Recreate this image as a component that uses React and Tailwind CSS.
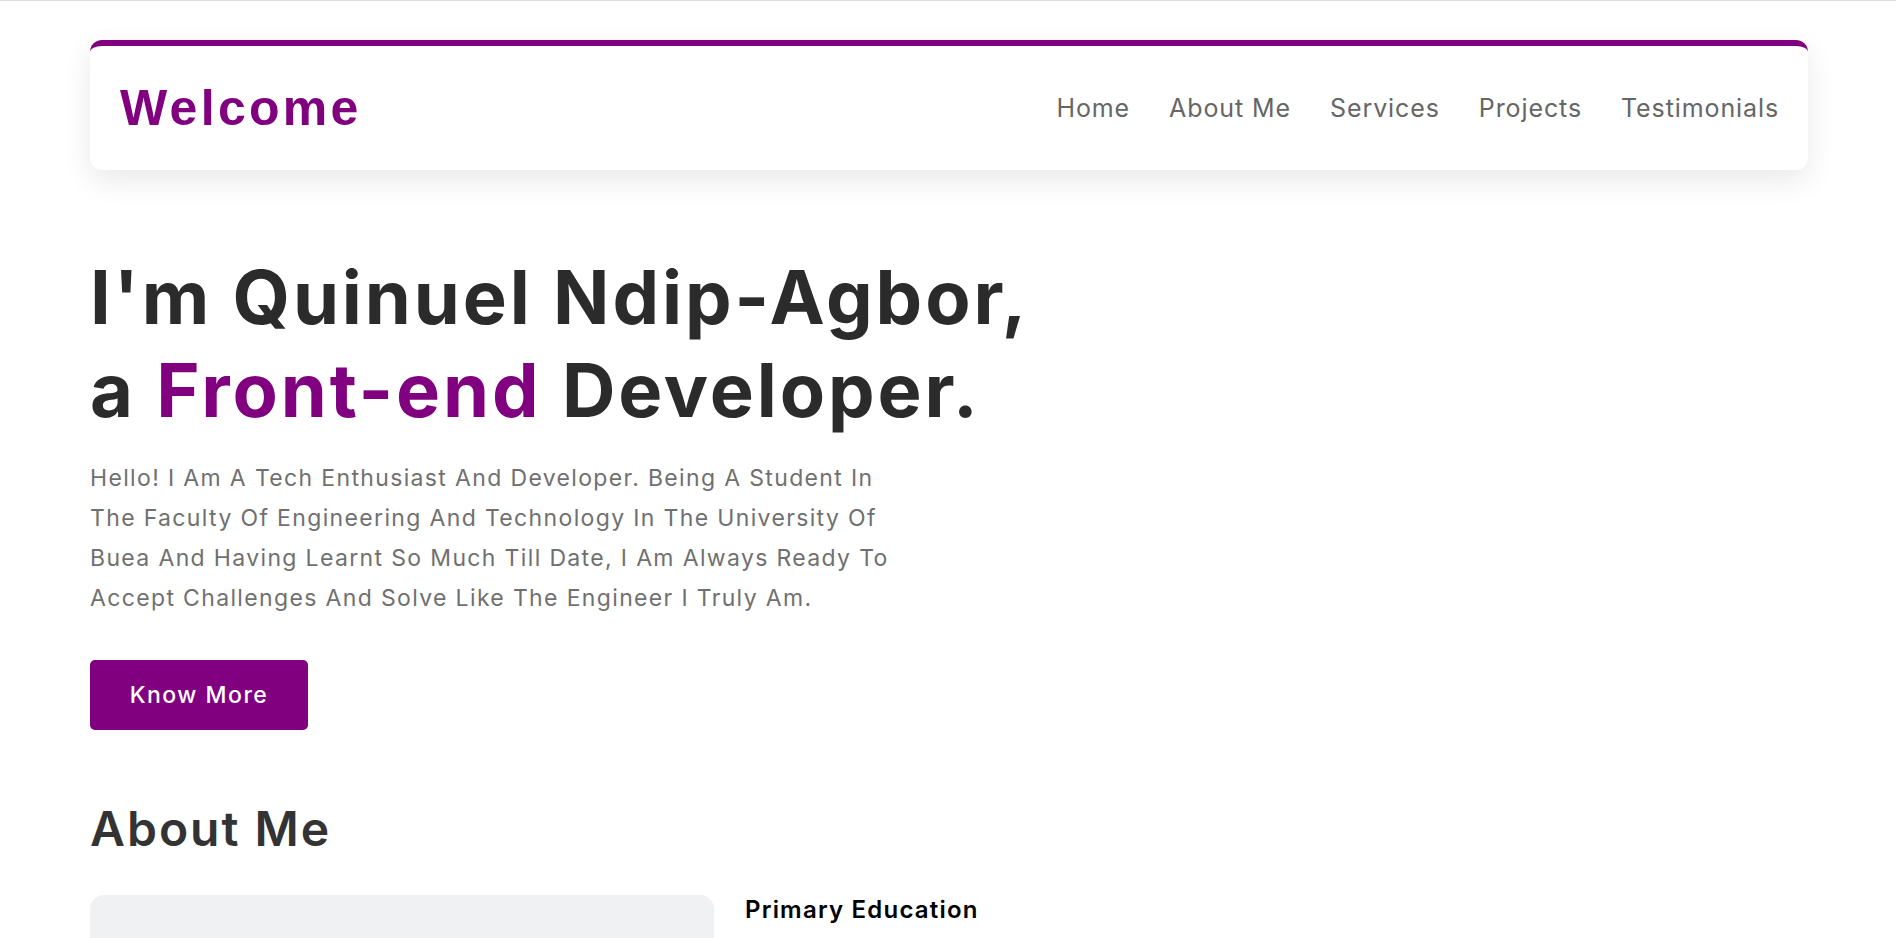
import React from "react";

const links = ["Home", "About Me", "Services", "Projects", "Testimonials"];

const App = () => {
    return (
        <div className="min-h-[938px] bg-white border-t border-[#dedede] font-['Inter',sans-serif] overflow-hidden">
            <div className="pl-[90px] pr-[88px]">
                {/* Navbar */}
                <nav className="mt-[39px] h-[130px] bg-white border-t-[6px] border-[#800080] rounded-[12px] shadow-[0_10px_30px_rgba(0,0,0,0.09)] flex items-center justify-between pl-[30px] pr-[29px]">
                    <h1 className="font-['Liberation_Sans',Arial,sans-serif] font-bold text-[50px] leading-none tracking-[3.3px] text-[#800080]">
                        Welcome
                    </h1>
                    <ul className="flex items-center gap-[39px] pt-[2px]">
                        {links.map((link) => (
                            <li key={link} className="text-[25px] tracking-[0.9px] text-[#666666]">
                                <a href="#">{link}</a>
                            </li>
                        ))}
                    </ul>
                </nav>

                {/* Hero */}
                <section className="mt-[81px]">
                    <h2 className="text-[74px] leading-[93px] font-bold text-[#2b2b2b] tracking-[2.9px]">
                        I'm Quinuel Ndip-Agbor,
                        <br />
                        a <span className="text-[#800080]">Front-end</span> Developer.
                    </h2>
                    <p className="mt-[21px] w-[860px] text-[23px] leading-[40px] tracking-[1.35px] text-[#707070]">
                        Hello! I Am A Tech Enthusiast And Developer. Being A Student In
                        <br />
                        The Faculty Of Engineering And Technology In The University Of
                        <br />
                        Buea And Having Learnt So Much Till Date, I Am Always Ready To
                        <br />
                        Accept Challenges And Solve Like The Engineer I Truly Am.
                    </p>
                    <button className="mt-[42px] w-[218px] h-[70px] rounded-[5px] bg-[#800080] text-white text-[23px] tracking-[1.5px] font-medium">
                        Know More
                    </button>
                </section>

                {/* About */}
                <section className="mt-[70px]">
                    <h2 className="text-[48px] leading-[58px] font-semibold tracking-[2px] text-[#333333]">About Me</h2>
                    <div className="mt-[37px] flex items-start gap-[31px]">
                        <div className="w-[624px] h-[400px] rounded-[14px] bg-[#f0f1f3]"></div>
                        <div className="flex-1">
                            <h3 className="text-[24px] leading-[29px] font-semibold tracking-[1.2px] text-black">Primary Education</h3>
                        </div>
                    </div>
                </section>
            </div>
        </div>
    );
};

export default App;
